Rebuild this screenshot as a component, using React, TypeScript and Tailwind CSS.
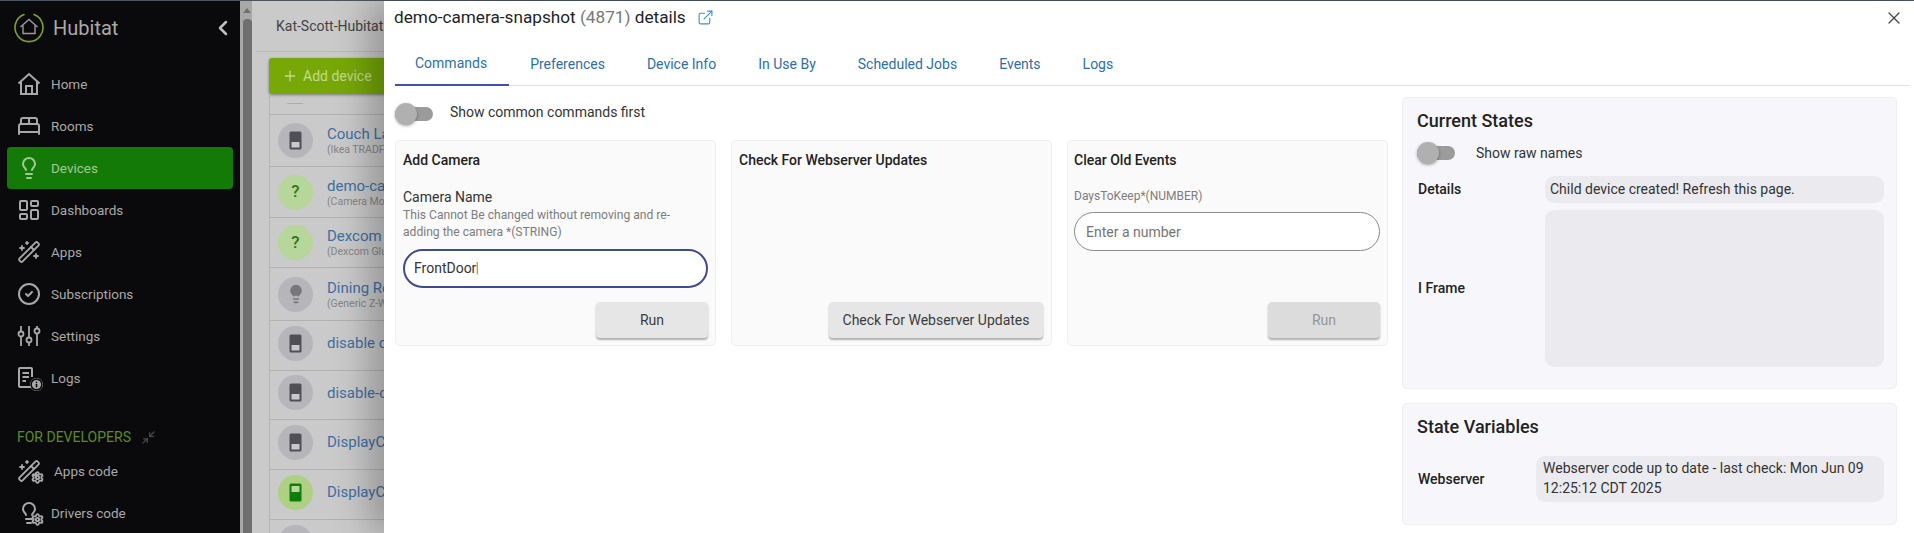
import { BedDouble, CircleCheck, LayoutDashboard, Lightbulb, WandSparkles, Minimize2, X, ExternalLink, ChevronLeft, Plus, Settings, Info } from "lucide-react";
import type { ReactNode } from "react";

function Logo() {
  return (
    <svg width="32" height="32" viewBox="0 0 32 32" fill="none">
      <path d="M11 2.5 A14 14 0 1 0 21 2.5" stroke="#7da32b" strokeWidth="1.6" strokeLinecap="round" />
      <path d="M7.5 15 L16 7.5 L24.5 15 M10 13.5 V21.5 H22 V13.5" stroke="#9a9a9a" strokeWidth="1.4" />
    </svg>
  );
}

function HomeIcon() {
  return (
    <svg width="24" height="24" viewBox="0 0 24 24" fill="none" stroke="currentColor" strokeWidth="2">
      <path d="M1.5 11.5 L12 2 L22.5 11.5 M4 10 V22 H20 V10 M9 22 V14 H15 V22" />
    </svg>
  );
}

function SlidersIcon() {
  return (
    <svg width="24" height="24" viewBox="0 0 24 24" fill="none" stroke="currentColor" strokeWidth="1.8">
      <path d="M4 2 V7.5 M4 12.5 V22 M12 2 V13.5 M12 18.5 V22 M20 2 V4.5 M20 9.5 V22" />
      <circle cx="4" cy="10" r="2.5" />
      <circle cx="12" cy="16" r="2.5" />
      <circle cx="20" cy="7" r="2.5" />
    </svg>
  );
}

function LogsIcon() {
  return (
    <span className="relative flex h-[24px] w-[24px]">
      <svg width="24" height="24" viewBox="0 0 24 24" fill="none" stroke="currentColor" strokeWidth="2">
        <path d="M14 21 H3 a1 1 0 0 1 -1 -1 V3 a1 1 0 0 1 1 -1 H14 a1 1 0 0 1 1 1 V11 M5.5 7 H12 M5.5 11 H12 M5.5 15 H9" />
      </svg>
      <Info size={13} strokeWidth={3} className="absolute bottom-[-1px] right-[-2px] rounded-full bg-[#a8a8a8] text-[#0a0a0c]" />
    </span>
  );
}

function WithGear({ children }: { children: ReactNode }) {
  return (
    <span className="relative flex h-[24px] w-[24px]">
      {children}
      <Settings size={13} strokeWidth={3.5} className="absolute bottom-[-1px] right-[-3px] text-[#a8a8a8]" />
    </span>
  );
}

const navItems: { label: string; icon: ReactNode; gap?: string }[] = [
  { label: "Home", icon: <HomeIcon /> },
  { label: "Rooms", icon: <BedDouble size={24} strokeWidth={2} /> },
  { label: "Devices", icon: <Lightbulb size={24} strokeWidth={2} /> },
  { label: "Dashboards", icon: <LayoutDashboard size={24} strokeWidth={2} /> },
  { label: "Apps", icon: <WandSparkles size={24} strokeWidth={1.8} /> },
  { label: "Subscriptions", icon: <CircleCheck size={24} strokeWidth={2} /> },
  { label: "Settings", icon: <SlidersIcon /> },
  { label: "Logs", icon: <LogsIcon /> },
];

function NavRow({ label, icon, active, wide }: { label: string; icon: ReactNode; active?: boolean; wide?: boolean }) {
  return (
    <div className={active ? "mx-[7px] flex h-[42px] shrink-0 items-center rounded-[4px] bg-[#137a07] pl-[10px] text-[#a3c896]" : "mx-[7px] flex h-[42px] shrink-0 items-center pl-[10px] text-[#a8a8a8]"}>
      <span className={wide ? "flex w-[37px] shrink-0" : "flex w-[34px] shrink-0"}>{icon}</span>
      <span className="text-[13.5px]">{label}</span>
    </div>
  );
}

function Sidebar() {
  return (
    <aside className="flex h-full w-[240px] shrink-0 flex-col bg-[#0a0a0c]">
      <div className="flex h-[54px] shrink-0 items-center justify-between pl-[13px] pr-[5px]">
        <div className="flex items-center gap-[8px]">
          <Logo />
          <span className="text-[20px] text-[#a9a9a9]">Hubitat</span>
        </div>
        <ChevronLeft size={24} strokeWidth={2.5} className="text-[#c0c0c0]" />
      </div>
      <div className="mt-[8px] flex shrink-0 flex-col">
        {navItems.map((n) => (
          <NavRow key={n.label} label={n.label} icon={n.icon} active={n.label === "Devices"} />
        ))}
      </div>
      <div className="mt-[25px] flex h-[26px] shrink-0 items-center gap-[10px] pl-[17px]">
        <span className="text-[14px] text-[#5f8a25]">FOR DEVELOPERS</span>
        <Minimize2 size={15} strokeWidth={2} className="text-[#4a4a4a]" />
      </div>
      <NavRow label="Apps code" wide icon={<WithGear><WandSparkles size={24} strokeWidth={1.8} /></WithGear>} />
      <NavRow label="Drivers code" icon={<WithGear><Lightbulb size={24} strokeWidth={2} /></WithGear>} />
    </aside>
  );
}

function SwitchGlyph({ on }: { on?: boolean }) {
  return (
    <svg width="13" height="19" viewBox="0 0 13 19">
      <rect x="0.5" y="0.5" width="12" height="18" rx="1.5" fill={on ? "#0f7d0a" : "#4f4f55"} />
      <rect x="2.5" y="11" width="8" height="5.5" fill={on ? "#0f7d0a" : "#c9c9cd"} />
      {on && <rect x="2.5" y="3" width="8" height="6" fill="#b9d69a" />}
    </svg>
  );
}

const rows: { name: string; sub?: string; kind: string; h: string }[] = [
  { name: "Couch La", sub: "(Ikea TRADF", kind: "switch", h: "h-[52px]" },
  { name: "demo-car", sub: "(Camera Mo", kind: "q", h: "h-[51px]" },
  { name: "Dexcom", sub: "(Dexcom Glu", kind: "q", h: "h-[50px]" },
  { name: "Dining Ro", sub: "(Generic Z-W", kind: "bulb", h: "h-[53px]" },
  { name: "disable o", kind: "switch", h: "h-[50px] pb-[5px]" },
  { name: "disable-c", kind: "switch", h: "h-[49px] pb-[5px]" },
  { name: "DisplayCa", kind: "switch", h: "h-[50px] pb-[5px]" },
  { name: "DisplayCa", kind: "on", h: "h-[50px] pb-[5px]" },
];

function DeviceIcon({ kind }: { kind: string }) {
  if (kind === "q")
    return <span className="flex h-[35px] w-[35px] shrink-0 items-center justify-center rounded-full bg-[#b7d69a] text-[17px] font-medium text-[#2c7a10]">?</span>;
  if (kind === "on")
    return <span className="flex h-[35px] w-[35px] shrink-0 items-center justify-center rounded-full bg-[#add083]"><SwitchGlyph on /></span>;
  if (kind === "bulb")
    return (
      <span className="flex h-[35px] w-[35px] shrink-0 items-center justify-center rounded-full bg-[#b6b6ba]">
        <Lightbulb size={20} className="fill-[#77777b] text-[#77777b]" />
      </span>
    );
  return <span className="flex h-[35px] w-[35px] shrink-0 items-center justify-center rounded-full bg-[#b6b6ba]"><SwitchGlyph /></span>;
}

function Background() {
  return (
    <div className="flex min-w-0 flex-1 flex-col overflow-hidden bg-[#cacaca]">
      <div className="ml-[4px] flex h-[51px] shrink-0 items-center border-b border-[#bfb4bf] pl-[20px] text-[14px] whitespace-nowrap text-[#444]">
        <span>Kat-Scott-Hubitat</span>
      </div>
      <div className="ml-[17px] mt-[6px] flex h-[36px] w-[200px] shrink-0 items-center gap-[5px] rounded-[3px] bg-[#77a808] pl-[13px] text-[14px] text-[#c3d98c] shadow-[0_1px_3px_rgba(0,0,0,0.4)]">
        <Plus size={16} />
        <span>Add device</span>
      </div>
      <div className="ml-[17px] flex w-[200px] shrink-0 flex-col border-l border-[#b4b4b4]">
        <div className="relative h-[21px] shrink-0 border-b border-[#b0b0b0]">
          <span className="absolute left-[17px] top-[9px] h-[1px] w-[16px] bg-[#adadad]" />
        </div>
        {rows.map((r, i) => (
          <div key={i} className={`${r.h} flex shrink-0 items-center gap-[14px] border-b border-[#b0b0b0] pl-[8px]`}>
            <DeviceIcon kind={r.kind} />
            <div className="flex flex-col whitespace-nowrap">
              <span className="text-[15px] leading-[18px] text-[#3f6fa3]">{r.name}</span>
              {r.sub && <span className="text-[10.5px] leading-[13px] text-[#858585]">{r.sub}</span>}
            </div>
          </div>
        ))}
        <div className="mt-[5px] pl-[8px]"><span className="block h-[35px] w-[35px] rounded-full bg-[#b6b6ba]" /></div>
      </div>
    </div>
  );
}

function Toggle() {
  return (
    <span className="flex h-[14px] w-[38px] shrink-0 items-center rounded-full bg-[#9b9b9b]">
      <span className="h-[22px] w-[22px] rounded-full bg-[#b0b0b0] shadow-[0_1px_3px_rgba(0,0,0,0.35)]" />
    </span>
  );
}

function Btn({ children, w, disabled }: { children: ReactNode; w: string; disabled?: boolean }) {
  return (
    <div className={`${w} ${disabled ? "bg-[#dcdcdc] text-[#959595]" : "bg-[#e6e6e6] text-[#3c3c3c]"} ml-auto mt-auto flex h-[36px] items-center justify-center rounded-[4px] text-[14px] shadow-[0_2px_2px_rgba(0,0,0,0.3)]`}>
      {children}
    </div>
  );
}

const tabs = ["Commands", "Preferences", "Device Info", "In Use By", "Scheduled Jobs", "Events", "Logs"];

function Modal() {
  return (
    <section className="absolute bottom-0 left-[384px] right-0 top-[1px] flex flex-col overflow-hidden bg-white shadow-[-16px_0_32px_rgba(0,0,0,0.25)]">
      <div className="flex h-[41px] shrink-0 items-start pl-[10px] pr-[10px] pt-[5px]">
        <h1 className="text-[17.2px] leading-[23px] font-normal text-[#1f1f1f]">
          demo-camera-snapshot <span className="text-[#777]">(4871)</span> details
        </h1>
        <ExternalLink size={17} strokeWidth={1.6} className="ml-[11px] mt-[3px] text-[#3f8fd0]" />
        <X size={20} strokeWidth={1.5} className="ml-auto mt-[2px] text-[#444]" />
      </div>
      <nav className="mr-[4px] ml-[11px] flex h-[44px] shrink-0 border-b border-[#e2e2e2] text-[14px] text-[#2d6ea8]">
        {tabs.map((t, i) => (
          <div key={t} className={i === 0 ? "-mb-[1px] flex h-[44px] items-center border-b-2 border-[#4150a8] pl-[20px] pr-[22px]" : "flex h-[44px] items-center px-[21px]"}>
            {t}
          </div>
        ))}
      </nav>
      <div className="flex min-h-0 flex-1 pl-[11px] pr-[17px]">
        <div className="flex w-[993px] shrink-0 flex-col">
          <div className="flex h-[54px] shrink-0 items-center gap-[17px] text-[14px] text-[#333]">
            <span className="mt-[2px] flex"><Toggle /></span>
            <span className="-mt-[1px]">Show common commands first</span>
          </div>
          <div className="grid grid-cols-3 gap-[15px]">
            <div className="flex h-[206px] flex-col rounded-[5px] border border-[#efefef] bg-[#fafafa] px-[7px] pb-[7px] pt-[10px]">
              <h3 className="text-[14px] leading-[18px] font-medium text-[#222]">Add Camera</h3>
              <div className="mt-[19px] text-[14px] leading-[18px] text-[#333]">Camera Name</div>
              <p className="mt-[1px] w-[285px] text-[12.1px] leading-[17px] text-[#7d7d7d]">This Cannot Be changed without removing and re-adding the camera *(STRING)</p>
              <div className="mt-[8px] flex h-[39px] items-center rounded-full border-2 border-[#3f4a8f] bg-white pl-[9px] text-[14px] text-[#333]">
                FrontDoor<span className="ml-[-1px] text-[15px] font-light leading-none text-[#555]">|</span>
              </div>
              <Btn w="w-[112px]">Run</Btn>
            </div>
            <div className="flex h-[206px] flex-col rounded-[5px] border border-[#efefef] bg-[#fafafa] pl-[7px] pr-[8px] pb-[7px] pt-[10px]">
              <h3 className="text-[14px] leading-[18px] font-medium text-[#222]">Check For Webserver Updates</h3>
              <Btn w="w-[214px]">Check For Webserver Updates</Btn>
            </div>
            <div className="flex h-[206px] flex-col rounded-[5px] border border-[#efefef] bg-[#fafafa] pl-[6px] pr-[7px] pb-[7px] pt-[10px]">
              <h3 className="text-[14px] leading-[18px] font-medium text-[#222]">Clear Old Events</h3>
              <div className="mt-[18px] text-[12px] leading-[18px] text-[#7d7d7d]">DaysToKeep*(NUMBER)</div>
              <div className="mt-[7px] flex h-[39px] items-center rounded-full border border-[#8a8a8a] bg-white pl-[11px] pt-[1px] text-[14px] text-[#757575]">Enter a number</div>
              <Btn w="w-[112px]" disabled>Run</Btn>
            </div>
          </div>
        </div>
        <div className="ml-[14px] flex min-w-0 flex-1 flex-col pt-[11px]">
          <div className="h-[292px] shrink-0 rounded-[5px] border border-[#efefef] bg-[#f7f7fb] pl-[14px] pr-[12px] pt-[11px]">
            <h2 className="text-[18px] leading-[23px] font-medium text-[#222]">Current States</h2>
            <div className="mt-[8px] flex h-[26px] items-center gap-[21px] text-[14px] text-[#333]">
              <Toggle />
              <span>Show raw names</span>
            </div>
            <div className="mt-[10px] grid grid-cols-[128px_1fr] gap-y-[7px]">
              <div className="flex items-center pl-[1px] text-[14px] font-medium text-[#222]">Details</div>
              <div className="flex h-[27px] items-center rounded-[9px] bg-[#ebebef] pl-[5px] text-[14px] text-[#333]">Child device created! Refresh this page.</div>
              <div className="flex items-center pl-[1px] text-[14px] font-medium text-[#222]">I Frame</div>
              <div className="h-[157px] rounded-[9px] bg-[#ebebef]" />
            </div>
          </div>
          <div className="mt-[14px] h-[122px] shrink-0 rounded-[5px] border border-[#efefef] bg-[#f7f7fb] pl-[14px] pr-[12px] pt-[11px]">
            <h2 className="text-[18px] leading-[23px] font-medium text-[#222]">State Variables</h2>
            <div className="mt-[18px] grid grid-cols-[119px_1fr]">
              <div className="flex items-center pl-[1px] text-[14px] font-medium text-[#222]">Webserver</div>
              <div className="h-[46px] rounded-[9px] bg-[#ebebef] px-[7px] py-[2px] text-[14px] leading-[20px] text-[#333]">Webserver code up to date - last check: Mon Jun 09 12:25:12 CDT 2025</div>
            </div>
          </div>
        </div>
      </div>
    </section>
  );
}

export default function App() {
  return (
    <div className="relative h-[533px] w-[1914px] overflow-hidden font-['Roboto',sans-serif]">
      <div className="h-[1px] bg-[#4b5563]" />
      <div className="flex h-[532px]">
        <Sidebar />
        <div className="flex w-[12px] shrink-0 flex-col items-end bg-[#a8a8a8]">
          <span className="mt-[7px] mr-[1px] h-0 w-0 border-x-[4px] border-b-[5px] border-x-transparent border-b-[#6f6f6f]" />
          <span className="mt-[6px] w-[9px] flex-1 rounded-t-[4px] bg-[#6f6f6f]" />
        </div>
        <Background />
      </div>
      <Modal />
    </div>
  );
}
